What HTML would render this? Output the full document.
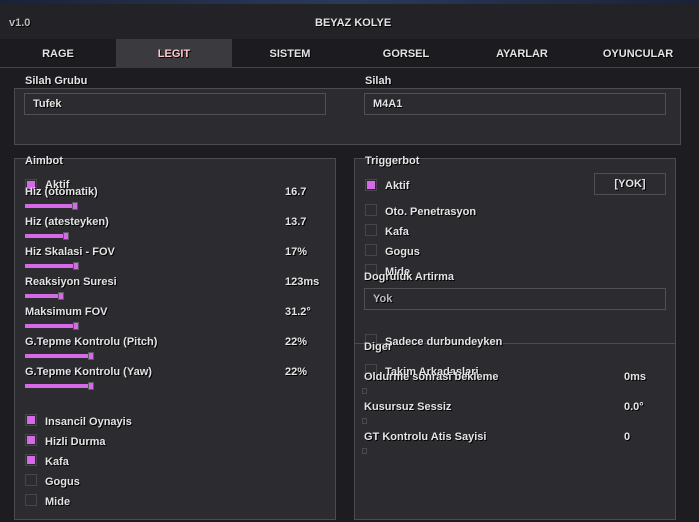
<!DOCTYPE html><html><head><style>
*{margin:0;padding:0;box-sizing:border-box}
body{width:699px;height:522px;background:#1d1d21;position:relative;overflow:hidden;font-family:"Liberation Sans",sans-serif;font-weight:bold;font-size:11px;color:#e4e4e4;text-shadow:1px 1px 0 #000}
.a{position:absolute;white-space:nowrap}
.t{position:absolute;line-height:12px;white-space:nowrap;margin-top:1px}
.box{position:absolute;border:1px solid #4c4c50;background:#2b2b30}
.cb{position:absolute;width:12px;height:12px;border:1px solid #46464a;background:#2b2b30}
.cb.on::after{content:"";position:absolute;left:1px;top:1px;width:8px;height:8px;background:#d46ae6}
.sl{position:absolute;height:4px;background:#d46ae6}
.th{position:absolute;width:6px;height:8px;border:1px solid #5a5a5e;background:#d46ae6}
.inp{position:absolute;height:22px;border:1px solid #505054;background:#2b2b30;padding-left:8px;line-height:21px}
.sm{position:absolute;width:5px;height:6px;border:1px solid #4a4a4e}
.tab{position:absolute;top:39px;height:29px;line-height:30px;text-align:center;width:116px}
</style></head><body>
<div class="a" style="left:0;top:0;width:699px;height:4px;background:linear-gradient(90deg,#1a2238,#2a3a5a,#1a2238)"></div>
<div class="a" style="left:0;top:4px;width:699px;height:35px;background:#232327"></div>
<div class="t" style="left:9px;top:16px;color:#bbb">v1.0</div>
<div class="t" style="left:315px;top:16px">BEYAZ KOLYE</div>
<div class="a" style="left:0;top:39px;width:699px;height:29px;background:#1c1c20;border-bottom:1px solid #444"></div>
<div class="a" style="left:116px;top:39px;width:116px;height:29px;background:#3a3a3f"></div>
<div class="tab" style="left:0">RAGE</div>
<div class="tab" style="left:116px;color:#ffc8cc">LEGIT</div>
<div class="tab" style="left:232px">SISTEM</div>
<div class="tab" style="left:348px">GORSEL</div>
<div class="tab" style="left:464px">AYARLAR</div>
<div class="tab" style="left:580px">OYUNCULAR</div>

<div class="box" style="left:14px;top:88px;width:667px;height:57px"></div>
<div class="t" style="left:25px;top:74px">Silah Grubu</div>
<div class="t" style="left:365px;top:74px">Silah</div>
<div class="inp" style="left:24px;top:93px;width:302px">Tufek</div>
<div class="inp" style="left:364px;top:93px;width:302px">M4A1</div>

<div class="box" style="left:14px;top:158px;width:322px;height:362px"></div>
<div class="t" style="left:25px;top:154px">Aimbot</div>
<div class="cb on" style="left:25px;top:179px"></div>
<div class="t" style="left:45px;top:178px">Aktif</div>

<div class="t" style="left:25px;top:185px">Hiz (otomatik)</div><div class="t" style="left:285px;top:185px">16.7</div>
<div class="sl" style="left:25px;top:204px;width:50px"></div><div class="th" style="left:72px;top:202px"></div>
<div class="t" style="left:25px;top:215px">Hiz (atesteyken)</div><div class="t" style="left:285px;top:215px">13.7</div>
<div class="sl" style="left:25px;top:234px;width:41px"></div><div class="th" style="left:63px;top:232px"></div>
<div class="t" style="left:25px;top:245px">Hiz Skalasi - FOV</div><div class="t" style="left:285px;top:245px">17%</div>
<div class="sl" style="left:25px;top:264px;width:51px"></div><div class="th" style="left:73px;top:262px"></div>
<div class="t" style="left:25px;top:275px">Reaksiyon Suresi</div><div class="t" style="left:285px;top:275px">123ms</div>
<div class="sl" style="left:25px;top:294px;width:36px"></div><div class="th" style="left:58px;top:292px"></div>
<div class="t" style="left:25px;top:305px">Maksimum FOV</div><div class="t" style="left:285px;top:305px">31.2°</div>
<div class="sl" style="left:25px;top:324px;width:51px"></div><div class="th" style="left:73px;top:322px"></div>
<div class="t" style="left:25px;top:335px">G.Tepme Kontrolu (Pitch)</div><div class="t" style="left:285px;top:335px">22%</div>
<div class="sl" style="left:25px;top:354px;width:66px"></div><div class="th" style="left:88px;top:352px"></div>
<div class="t" style="left:25px;top:365px">G.Tepme Kontrolu (Yaw)</div><div class="t" style="left:285px;top:365px">22%</div>
<div class="sl" style="left:25px;top:384px;width:66px"></div><div class="th" style="left:88px;top:382px"></div>

<div class="cb on" style="left:25px;top:414px"></div><div class="t" style="left:45px;top:415px">Insancil Oynayis</div>
<div class="cb on" style="left:25px;top:434px"></div><div class="t" style="left:45px;top:435px">Hizli Durma</div>
<div class="cb on" style="left:25px;top:454px"></div><div class="t" style="left:45px;top:455px">Kafa</div>
<div class="cb" style="left:25px;top:474px"></div><div class="t" style="left:45px;top:475px">Gogus</div>
<div class="cb" style="left:25px;top:494px"></div><div class="t" style="left:45px;top:495px">Mide</div>

<div class="box" style="left:354px;top:158px;width:322px;height:362px"></div>
<div class="a" style="left:354px;top:343px;width:322px;height:1px;background:#4c4c50"></div>
<div class="t" style="left:365px;top:154px">Triggerbot</div>
<div class="cb on" style="left:365px;top:179px"></div><div class="t" style="left:385px;top:179px">Aktif</div>
<div class="inp" style="left:594px;top:173px;width:72px;padding:0;text-align:center">[YOK]</div>
<div class="cb" style="left:365px;top:204px"></div><div class="t" style="left:385px;top:205px">Oto. Penetrasyon</div>
<div class="cb" style="left:365px;top:224px"></div><div class="t" style="left:385px;top:225px">Kafa</div>
<div class="cb" style="left:365px;top:244px"></div><div class="t" style="left:385px;top:245px">Gogus</div>
<div class="cb" style="left:365px;top:264px"></div><div class="t" style="left:385px;top:265px">Mide</div>
<div class="t" style="left:364px;top:270px">Dogruluk Artirma</div>
<div class="inp" style="left:364px;top:288px;width:302px;color:#bbb">Yok</div>
<div class="cb" style="left:365px;top:334px"></div><div class="t" style="left:385px;top:335px">Sadece durbundeyken</div>
<div class="t" style="left:364px;top:340px">Diger</div>
<div class="cb" style="left:365px;top:364px"></div><div class="t" style="left:385px;top:365px">Takim Arkadaslari</div>
<div class="t" style="left:364px;top:370px">Oldurme sonrasi bekleme</div><div class="t" style="left:624px;top:370px">0ms</div>
<div class="sm" style="left:362px;top:388px"></div>
<div class="t" style="left:364px;top:400px">Kusursuz Sessiz</div><div class="t" style="left:624px;top:400px">0.0°</div>
<div class="sm" style="left:362px;top:418px"></div>
<div class="t" style="left:364px;top:430px">GT Kontrolu Atis Sayisi</div><div class="t" style="left:624px;top:430px">0</div>
<div class="sm" style="left:362px;top:448px"></div>
</body></html>
